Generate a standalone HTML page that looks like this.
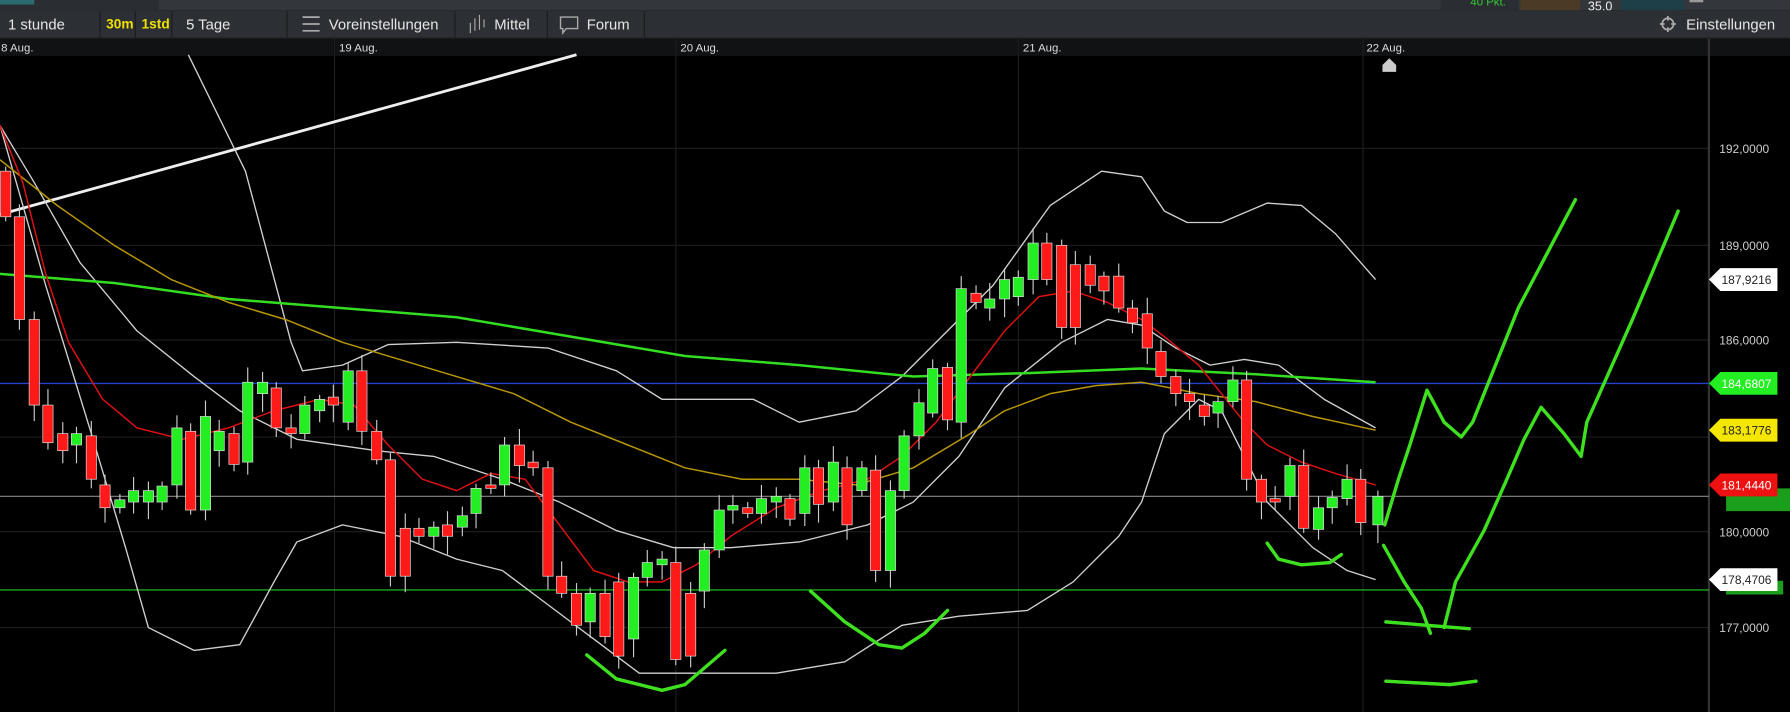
<!DOCTYPE html>
<html><head><meta charset="utf-8"><style>
html,body{margin:0;padding:0;background:#000;overflow:hidden}
svg{display:block}
text{font-family:"Liberation Sans",Arial,sans-serif}
</style></head><body>
<svg id="s" width="1790" height="712" viewBox="0 0 1568 624" preserveAspectRatio="none" xmlns="http://www.w3.org/2000/svg">
<rect width="1568" height="624" fill="#000"/>
<rect x="0" y="0" width="1568" height="9" fill="#33373c"/>
<rect x="0" y="0" width="139" height="9" fill="#2a2d31"/>
<rect x="0" y="0" width="30" height="4" fill="#2a6b70"/>
<rect x="1262" y="0" width="68" height="9" fill="#2a2d31"/>
<text x="1288" y="5" font-size="10" fill="#3c3">40 Pkt.</text>
<rect x="1332" y="0" width="52" height="9" fill="#4a3a26"/>
<text x="1391" y="9" font-size="11" fill="#eee">35,0</text>
<rect x="1420" y="0" width="55" height="9" fill="#1e3f47"/>
<rect x="1480" y="0" width="12" height="2" fill="#999"/>
<rect x="0" y="9" width="1568" height="25" fill="#2c2f34"/>
<rect x="0" y="33" width="1568" height="1" fill="#1a1c1f"/>
<g fill="#1a1c1f">
<rect x="87" y="10" width="1" height="23"/><rect x="118" y="10" width="1" height="23"/><rect x="150" y="10" width="1" height="23"/>
<rect x="251" y="10" width="1" height="23"/><rect x="398" y="10" width="1" height="23"/><rect x="479" y="10" width="1" height="23"/><rect x="564" y="10" width="1" height="23"/>
</g>
<text x="7" y="26" font-size="13" fill="#e6e6e6">1 stunde</text>
<text x="93" y="25" font-size="12" font-weight="bold" fill="#f0e000">30m</text>
<text x="124" y="25" font-size="12" font-weight="bold" fill="#f0e000">1std</text>
<text x="163" y="26" font-size="13" fill="#e6e6e6">5 Tage</text>
<g stroke="#aaa" stroke-width="1.5"><line x1="265" y1="15" x2="280" y2="15"/><line x1="265" y1="21" x2="280" y2="21"/><line x1="265" y1="27" x2="280" y2="27"/></g>
<text x="288" y="26" font-size="13" fill="#e6e6e6">Voreinstellungen</text>
<g stroke="#aaa" stroke-width="1"><line x1="412" y1="20" x2="412" y2="29"/><line x1="416" y1="16" x2="416" y2="27"/><line x1="420" y1="13" x2="420" y2="26"/><line x1="424" y1="17" x2="424" y2="24"/></g>
<text x="433" y="26" font-size="13" fill="#e6e6e6">Mittel</text>
<path d="M491 15h15v10h-10l-3 4v-4h-2z" fill="none" stroke="#aaa" stroke-width="1.2"/>
<text x="514" y="26" font-size="13" fill="#e6e6e6">Forum</text>
<circle cx="1461" cy="21" r="5" fill="none" stroke="#aaa" stroke-width="1.5"/>
<g stroke="#aaa" stroke-width="1.5"><line x1="1454" y1="21" x2="1468" y2="21"/><line x1="1461" y1="14" x2="1461" y2="28"/></g>
<circle cx="1461" cy="21" r="3" fill="#2c2f34"/>
<text x="1477" y="26" font-size="13" fill="#e6e6e6">Einstellungen</text>
<rect x="0" y="34" width="1568" height="15" fill="#111214"/>
<text x="1" y="45" font-size="10" fill="#ddd">8 Aug.</text>
<text x="297" y="45" font-size="10" fill="#ddd">19 Aug.</text>
<text x="596" y="45" font-size="10" fill="#ddd">20 Aug.</text>
<text x="896" y="45" font-size="10" fill="#ddd">21 Aug.</text>
<text x="1197" y="45" font-size="10" fill="#ddd">22 Aug.</text>
<path d="M1211 63v-6l6-6 6 6v6z" fill="#ccc"/>
<g stroke="#1e1e1e" stroke-width="1">
<line x1="293" y1="34" x2="293" y2="624"/><line x1="592" y1="34" x2="592" y2="624"/><line x1="892" y1="34" x2="892" y2="624"/><line x1="1194" y1="34" x2="1194" y2="624"/>
<line x1="0" y1="130" x2="1497" y2="130"/><line x1="0" y1="215" x2="1497" y2="215"/><line x1="0" y1="298" x2="1497" y2="298"/><line x1="0" y1="383" x2="1497" y2="383"/><line x1="0" y1="466" x2="1497" y2="466"/><line x1="0" y1="550" x2="1497" y2="550"/>
</g>
<line x1="1497" y1="34" x2="1497" y2="624" stroke="#333" stroke-width="2"/>
<line x1="0" y1="336" x2="1497" y2="336" stroke="#2244cc" stroke-width="1.2"/>
<line x1="0" y1="435" x2="1497" y2="435" stroke="#888" stroke-width="1"/>
<line x1="0" y1="517" x2="1497" y2="517" stroke="#22cc22" stroke-width="1"/>
<g font-size="10.5" fill="#ccc">
<text x="1506" y="134">192,0000</text><text x="1506" y="219">189,0000</text><text x="1506" y="302">186,0000</text>
<text x="1506" y="470">180,0000</text><text x="1506" y="554">177,0000</text>
</g>
<path d="M1512 428h56v20h-56z" fill="#1b9e1b"/>
<path d="M1512 509h50v12h-50z" fill="#1b9e1b"/>
<path d="M1497 245l10-10h50v20h-50z" fill="#fff"/><text x="1508" y="249" font-size="10.5" fill="#222">187,9216</text>
<path d="M1497 336l10-10h50v20h-50z" fill="#22ee22"/><text x="1508" y="340" font-size="10.5" fill="#fff">184,6807</text>
<path d="M1497 377l10-10h50v20h-50z" fill="#f5e600"/><text x="1508" y="381" font-size="10.5" fill="#222">183,1776</text>
<path d="M1497 425l10-10h50v20h-50z" fill="#ee1111"/><text x="1508" y="429" font-size="10.5" fill="#fff">181,4440</text>
<path d="M1497 508l10-10h50v20h-50z" fill="#fff"/><text x="1508" y="512" font-size="10.5" fill="#222">178,4706</text>
<g id="ind" fill="none" stroke-linejoin="round"></g>
<g id="cnd"></g>
<g id="draw" fill="none" stroke="#3ee020" stroke-width="3" stroke-linecap="round" stroke-linejoin="round"></g>
</svg>
<script>
var NS="http://www.w3.org/2000/svg";
function pl(g,pts,col,w){var p=document.createElementNS(NS,"polyline");p.setAttribute("points",pts.map(function(a){return a.join(",")}).join(" "));if(col)p.setAttribute("stroke",col);if(w)p.setAttribute("stroke-width",w);document.getElementById(g).appendChild(p);}
pl("ind",[[0,188],[505,48]],"#eee",2.5);
pl("ind",[[165,48],[215,150],[255,300],[265,325],[300,320],[340,302],[400,300],[480,305],[540,325],[580,350],[600,350],[660,350],[700,370],[750,360],[790,330],[830,290],[870,250],[920,180],[965,150],[1000,155],[1020,185],[1040,195],[1070,195],[1110,178],[1140,180],[1170,205],[1205,245]],"#cfcfcf",1.2);
pl("ind",[[0,110],[30,160],[70,230],[120,290],[170,330],[210,360],[260,385],[330,395],[380,400],[440,420],[490,440],[540,465],[590,480],[640,480],[700,475],[760,460],[800,440],[840,400],[880,340],[930,300],[970,280],[1000,285],[1030,305],[1060,320],[1090,315],[1120,320],[1160,350],[1205,375]],"#cfcfcf",1.2);
pl("ind",[[0,110],[40,250],[80,380],[110,480],[130,550],[170,570],[210,565],[240,510],[260,475],[300,460],[350,470],[400,490],[440,500],[480,530],[520,560],[560,590],[600,590],[680,590],[740,580],[790,548],[840,540],[900,535],[940,510],[980,470],[1000,440],[1020,380],[1050,350],[1070,360],[1090,400],[1110,440],[1150,480],[1180,500],[1205,508]],"#cfcfcf",1.2);
pl("ind",[[0,240],[100,248],[200,262],[300,270],[400,278],[500,295],[600,312],[700,320],[800,330],[900,327],[1000,323],[1100,328],[1205,335]],"#33dd22",2.2);
pl("ind",[[0,140],[50,180],[100,215],[150,245],[200,265],[250,280],[300,300],[350,315],[400,330],[450,345],[500,370],[550,390],[600,410],[650,420],[700,420],[750,425],[800,410],[850,380],[880,360],[920,345],[960,338],[1000,335],[1050,345],[1100,352],[1150,365],[1205,377]],"#b8960a",1.3);
pl("ind",[[0,110],[20,160],[40,240],[60,300],[90,350],[120,375],[160,385],[200,375],[240,360],[280,350],[310,355],[340,390],[370,420],[400,430],[430,415],[460,420],[490,460],[520,500],[550,510],[580,510],[610,495],[640,470],[680,445],[720,430],[760,420],[790,400],[820,370],[850,330],[880,290],[910,260],[940,255],[970,265],[1000,280],[1020,295],[1050,320],[1070,345],[1090,370],[1110,390],[1140,405],[1170,415],[1205,425]],"#dd1111",1.3);
var c=[[5,"r",150,190],[17,"r",190,280],[30,"r",280,355],[42,"r",355,388],[55,"r",380,395],[67,"g",380,390],[80,"r",382,420],[92,"r",425,445],[105,"g",438,445],[117,"g",430,440],[130,"g",430,440],[142,"g",426,440],[155,"g",375,425],[167,"r",378,447],[180,"g",365,447],[192,"g",378,395],[205,"r",380,407],[217,"g",335,405],[230,"g",335,345],[242,"r",340,375],[255,"r",375,380],[267,"g",355,380],[280,"g",350,360],[292,"r",348,355],[305,"g",325,370],[317,"r",325,378],[330,"r",378,403],[342,"r",403,505],[355,"r",463,505],[367,"r",463,470],[380,"g",462,470],[392,"r",460,470],[405,"g",452,462],[417,"g",428,450],[430,"r",425,428],[442,"g",390,425],[455,"r",390,408],[467,"r",405,410],[480,"r",410,505],[492,"r",505,520],[505,"r",520,548],[517,"g",520,545],[530,"r",520,558],[542,"r",510,575],[555,"g",506,560],[567,"g",493,506],[580,"g",490,495],[592,"r",493,578],[605,"r",520,575],[617,"g",482,518],[630,"g",447,482],[642,"g",443,447],[655,"r",445,450],[667,"g",437,450],[680,"g",435,440],[692,"r",437,455],[705,"g",410,450],[717,"r",410,442],[730,"g",405,440],[742,"r",410,460],[755,"g",410,430],[767,"r",412,500],[780,"g",430,500],[792,"g",382,430],[805,"g",353,382],[817,"g",323,362],[830,"r",322,368],[842,"g",253,370],[855,"r",257,265],[867,"g",262,270],[880,"g",245,262],[892,"g",243,260],[905,"g",213,245],[917,"r",213,245],[930,"r",215,287],[942,"r",232,287],[955,"r",232,250],[967,"r",242,255],[980,"r",242,270],[992,"r",270,283],[1005,"r",275,305],[1017,"r",308,330],[1030,"r",330,345],[1042,"r",345,352],[1055,"r",355,365],[1067,"g",352,362],[1080,"g",333,352],[1092,"r",333,420],[1105,"r",420,440],[1117,"r",437,440],[1130,"g",408,435],[1142,"r",408,463],[1155,"g",445,464],[1167,"g",436,445],[1180,"g",420,437],[1192,"r",420,458],[1207,"g",435,460]];
var g=document.getElementById("cnd");
c.forEach(function(k,i){var x=k[0],t=k[2],b=k[3],h=(i*7)%11+4,l=(i*5)%13+4;
var w=document.createElementNS(NS,"line");w.setAttribute("x1",x);w.setAttribute("x2",x);w.setAttribute("y1",t-h);w.setAttribute("y2",b+l);w.setAttribute("stroke","#ccc");w.setAttribute("stroke-width","1");g.appendChild(w);
var r=document.createElementNS(NS,"rect");r.setAttribute("x",x-4.5);r.setAttribute("y",t);r.setAttribute("width",9);r.setAttribute("height",Math.max(2,b-t));r.setAttribute("fill",k[1]=="r"?"#ff1a1a":"#22ee22");r.setAttribute("stroke","#ddd");r.setAttribute("stroke-width","0.6");g.appendChild(r);});
var d=[[[514,574],[540,595],[580,605],[600,600],[635,570]],[[710,518],[740,545],[770,565],[790,568],[810,555],[830,535]],[[1110,476],[1120,490],[1140,495],[1165,493],[1175,486]],[[1213,460],[1225,420],[1235,390],[1250,342],[1265,370],[1280,383],[1290,370],[1330,270],[1380,175]],[[1212,478],[1230,510],[1245,533],[1253,555]],[[1214,545],[1250,548],[1287,551]],[[1265,550],[1275,510],[1300,465],[1320,420],[1335,385],[1350,357],[1370,380],[1385,400],[1390,370],[1430,280],[1470,185]],[[1214,597],[1270,600],[1293,597]]];
d.forEach(function(p){pl("draw",p);});
</script>
</body></html>
